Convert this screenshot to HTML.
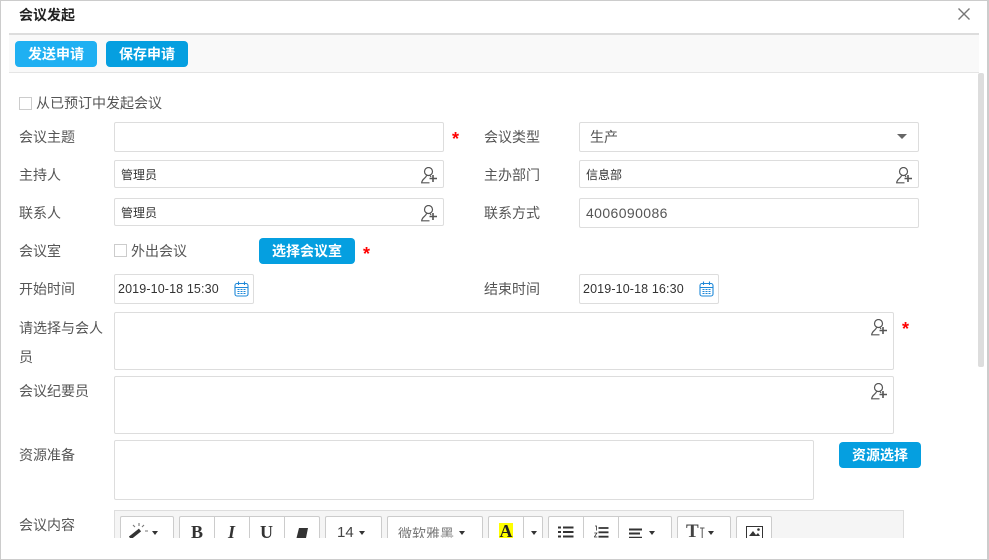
<!DOCTYPE html>
<html lang="zh-CN"><head><meta charset="utf-8"><title>会议发起</title>
<style>
*{box-sizing:border-box}
html,body{margin:0;padding:0;background:#fff}
body{width:989px;height:560px;overflow:hidden;position:relative;font-family:"Liberation Sans","Noto Sans CJK SC",sans-serif;font-size:14px;color:#555}
.a{position:absolute}
.frame{left:0;top:0;width:989px;height:560px;border:1px solid #ccc;border-right-width:2px;border-bottom-width:1px;pointer-events:none;z-index:9}
.l{position:absolute;left:19px;font-size:14px;line-height:20px;color:#555;white-space:nowrap}
.l2{left:484px}
.in{position:absolute;background:#fff;border:1px solid #ddd;border-radius:2px;font-size:12px;color:#333}
.btn{position:absolute;background:#059fe0;color:#fff;border-radius:4px;font-size:14px;font-weight:bold;text-align:center;height:26px;line-height:26px}
.star{position:absolute;color:#f00;font-size:18px;line-height:20px;font-weight:bold}
.cb{position:absolute;width:13px;height:13px;border:1px solid #ccc;background:#fff}
.t{position:absolute;white-space:nowrap}
.ub{position:absolute;right:5px;top:6px}
.tb{position:absolute;top:516px;height:40px;background:#fff;border:1px solid #ccc;border-radius:2px 2px 0 0;color:#333;font-size:16px}
.sep{position:absolute;top:516px;width:1px;height:40px;background:#ccc}
.car{position:absolute;top:531px;width:0;height:0;border-left:3px solid transparent;border-right:3px solid transparent;border-top:4px solid #333}
.dt{font-size:12.500px;line-height:29px;padding-left:3px;color:#333;letter-spacing:.13px}
</style></head>
<body>
<svg width="0" height="0" style="position:absolute"><defs>
<symbol id="u" viewBox="0 0 17 17"><g fill="none" stroke="#555" stroke-width="1.200"><circle cx="7.500" cy="4.500" r="4"/><path d="M5.500 8.500C5 11.500 1 11.500 0.700 15.800H8.500"/><path d="M9.300 8.800L10 10"/></g><path d="M12 8v7M8.500 11.500h7.500" stroke="#555" stroke-width="1.600" fill="none"/></symbol>
<symbol id="c" viewBox="0 0 15 16"><g fill="none" stroke="#1e88d8" stroke-width="1.100"><rect x="1" y="2.500" width="13" height="12.500" rx="2"/><path d="M1 6.500H14M4.500 0.500V4M10.500 0.500V4"/></g><path d="M3.500 8.500h2M6.500 8.500h2M9.500 8.500h2M3.500 10.500h2M6.500 10.500h2M9.500 10.500h2M3.500 12.500h2M6.500 12.500h2M9.500 12.500h2" stroke="#1e88d8" stroke-width="1.100"/></symbol>
</defs></svg>

<div class="a frame"></div>
<div class="t" style="left:19px;top:6px;font-size:14px;font-weight:bold;color:#222;line-height:18px">会议发起</div>
<svg class="a" style="left:958px;top:8px" width="12" height="12" viewBox="0 0 12 12"><path d="M0.500 0.500L11.500 11.500M11.500 0.500L0.500 11.500" stroke="#777" stroke-width="1.400" fill="none"/></svg>

<div class="a" style="left:9px;top:33px;width:970px;height:40px;background:#f9f9f9;border-top:2px solid #ddd;border-bottom:1px solid #e5e5e5"></div>
<div class="btn" style="left:15px;top:41px;width:82px;background:#1fb0f2">发送申请</div>
<div class="btn" style="left:106px;top:41px;width:82px">保存申请</div>

<div class="a" style="left:978px;top:73px;width:6px;height:294px;background:#ddd;border-radius:2px"></div>

<div class="cb" style="left:19px;top:97px"></div>
<div class="l" style="left:36px;top:93px">从已预订中发起会议</div>

<div class="l" style="top:127px">会议主题</div>
<div class="in" style="left:114px;top:122px;width:330px;height:30px"></div>
<div class="star" style="left:452px;top:129px">*</div>
<div class="l l2" style="top:127px">会议类型</div>
<div class="in" style="left:579px;top:122px;width:340px;height:30px;font-size:14px;line-height:28px;padding-left:10px;color:#555">生产</div>
<div class="a" style="left:897px;top:134px;width:0;height:0;border-left:5px solid transparent;border-right:5px solid transparent;border-top:5px solid #666"></div>

<div class="l" style="top:165px">主持人</div>
<div class="in" style="left:114px;top:160px;width:330px;height:28px;line-height:29px;padding-left:6px">管理员<svg class="ub" width="17" height="17"><use href="#u"/></svg></div>
<div class="l l2" style="top:165px">主办部门</div>
<div class="in" style="left:579px;top:160px;width:340px;height:28px;line-height:29px;padding-left:6px">信息部<svg class="ub" width="17" height="17"><use href="#u"/></svg></div>

<div class="l" style="top:203px">联系人</div>
<div class="in" style="left:114px;top:198px;width:330px;height:28px;line-height:29px;padding-left:6px">管理员<svg class="ub" width="17" height="17"><use href="#u"/></svg></div>
<div class="l l2" style="top:203px">联系方式</div>
<div class="in" style="left:579px;top:198px;width:340px;height:30px;font-size:14px;line-height:28px;padding-left:6px;color:#555;letter-spacing:.4px">4006090086</div>

<div class="l" style="top:241px">会议室</div>
<div class="cb" style="left:114px;top:244px"></div>
<div class="l" style="left:131px;top:241px">外出会议</div>
<div class="btn" style="left:259px;top:238px;width:96px">选择会议室</div>
<div class="star" style="left:363px;top:244px">*</div>

<div class="l" style="top:279px">开始时间</div>
<div class="in dt" style="left:114px;top:274px;width:140px;height:30px">2019-10-18 15:30<svg class="a" style="left:119px;top:6px" width="15" height="16"><use href="#c"/></svg></div>
<div class="l l2" style="top:279px">结束时间</div>
<div class="in dt" style="left:579px;top:274px;width:140px;height:30px">2019-10-18 16:30<svg class="a" style="left:119px;top:6px" width="15" height="16"><use href="#c"/></svg></div>

<div class="l" style="top:314px;width:90px;line-height:29px;white-space:normal">请选择与会人员</div>
<div class="in" style="left:114px;top:312px;width:780px;height:58px"><svg class="ub" width="17" height="17"><use href="#u"/></svg></div>
<div class="star" style="left:902px;top:319px">*</div>

<div class="l" style="top:381px">会议纪要员</div>
<div class="in" style="left:114px;top:376px;width:780px;height:58px"><svg class="ub" width="17" height="17"><use href="#u"/></svg></div>

<div class="l" style="top:445px">资源准备</div>
<div class="in" style="left:114px;top:440px;width:700px;height:60px"></div>
<div class="btn" style="left:839px;top:442px;width:82px">资源选择</div>

<div class="l" style="top:515px">会议内容</div>

<div class="a" style="left:114px;top:510px;width:790px;height:40px;background:#f5f5f5;border:1px solid #ddd;border-bottom:0"></div>

<div class="tb" style="left:120px;width:54px"></div>
<svg class="a" style="left:129px;top:522px" width="20" height="18" viewBox="0 0 20 18"><path d="M1 16L11 8" stroke="#333" stroke-width="3.500"/><path d="M10 1v3M15 3l-2 2M4 3l2 2M16 9h3" stroke="#777" stroke-width="1.100" fill="none"/></svg>
<div class="car" style="left:152px"></div>

<div class="tb" style="left:179px;width:141px"></div>
<div class="sep" style="left:214px"></div><div class="sep" style="left:249px"></div><div class="sep" style="left:284px"></div>
<div class="t" style="left:191px;top:521px;font:bold 18px/22px 'Liberation Serif',serif;color:#333">B</div>
<div class="t" style="left:228px;top:521px;font:italic bold 18px/22px 'Liberation Serif',serif;color:#333">I</div>
<div class="t" style="left:260px;top:521px;font:bold 18px/22px 'Liberation Serif',serif;color:#333">U</div>
<svg class="a" style="left:296px;top:528px" width="13" height="12" viewBox="0 0 13 12"><path d="M3 0H12L10 10H0.500Z" fill="#333"/></svg>

<div class="tb" style="left:325px;width:57px"></div>
<div class="t" style="left:337px;top:523px;font-size:15px;line-height:20px;color:#444">14</div>
<div class="car" style="left:359px"></div>

<div class="tb" style="left:387px;width:96px"></div>
<div class="t" style="left:398px;top:524px;font-size:14px;line-height:20px;color:#777">微软雅黑</div>
<div class="car" style="left:459px"></div>

<div class="tb" style="left:488px;width:55px"></div>
<div class="sep" style="left:523px"></div>
<div class="t" style="left:499px;top:523px;width:14px;height:20px;background:#ff0;font:bold 18px/16px 'Liberation Serif',serif;color:#222;text-align:center">A</div>
<div class="car" style="left:531px"></div>

<div class="tb" style="left:548px;width:124px"></div>
<div class="sep" style="left:583px"></div><div class="sep" style="left:618px"></div>
<svg class="a" style="left:558px;top:526px" width="16" height="14" viewBox="0 0 16 14"><path d="M0 1.500h3M5 1.500h10.500M0 6h3M5 6h10.500M0 10.500h3M5 10.500h10.500" stroke="#333" stroke-width="2"/></svg>
<svg class="a" style="left:594px;top:525px" width="16" height="15" viewBox="0 0 16 15"><path d="M4.500 3h10M4.500 7.300h10M4.500 11.700h10" stroke="#333" stroke-width="1.800"/><path d="M1 1h1.500v4.500M0.300 8h2.600L0.300 12h3" stroke="#333" stroke-width="0.800" fill="none"/></svg>
<svg class="a" style="left:629px;top:528px" width="14" height="12" viewBox="0 0 14 12"><path d="M0 1.500h13M0 5.500h11M0 9.700h13" stroke="#333" stroke-width="2"/></svg>
<div class="car" style="left:649px"></div>

<div class="tb" style="left:677px;width:54px"></div>
<div class="t" style="left:686px;top:520px;font:bold 19px/24px 'Liberation Serif',serif;color:#444">T</div>
<svg class="a" style="left:698px;top:527px" width="8" height="13" viewBox="0 0 8 13"><path d="M2 1h4.500M4.200 1v11M2 12h4.500" stroke="#555" stroke-width="1" fill="none"/></svg>
<div class="car" style="left:708px"></div>

<div class="tb" style="left:736px;width:36px"></div>
<svg class="a" style="left:746px;top:526px" width="17" height="15" viewBox="0 0 17 15"><rect x="0.500" y="0.500" width="16" height="14" fill="none" stroke="#333"/><path d="M3 10L7 5L10 9L12 7L14 10Z" fill="#333"/><circle cx="12.500" cy="3.500" r="1.300" fill="#333"/></svg>

<div class="a" style="left:1px;top:538px;width:986px;height:21px;background:#fff;z-index:5"></div>
</body></html>
